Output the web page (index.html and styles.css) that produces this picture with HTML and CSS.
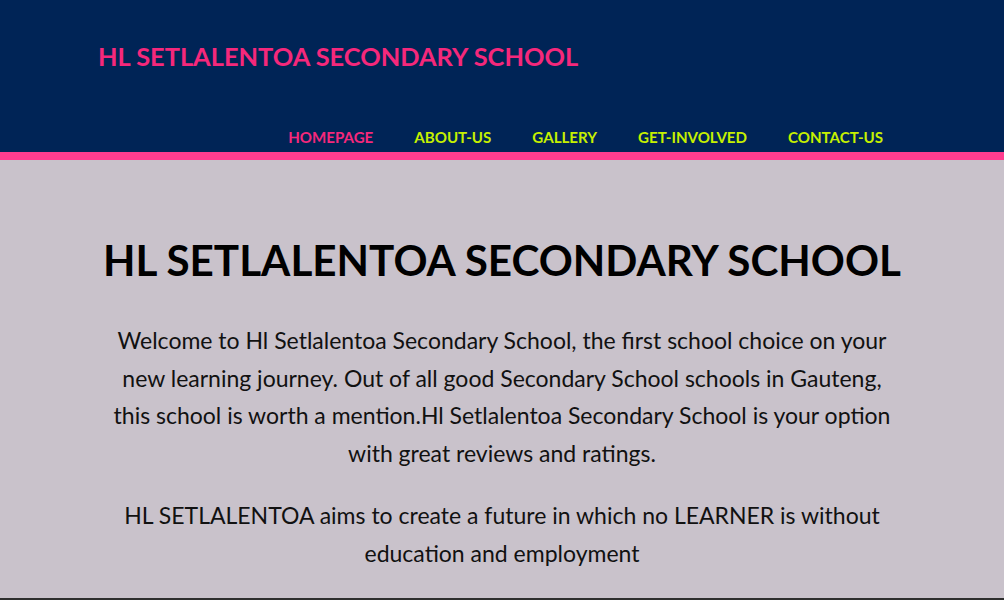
FILE: index.html
```html
<!DOCTYPE html>
<html lang="en">
<head>
<meta charset="utf-8">
<title>HL Setlalentoa Secondary School</title>
<link rel="stylesheet" href="styles.css">
</head>
<body>
<header class="site-header">
  <div class="brand">HL SETLALENTOA SECONDARY SCHOOL</div>
  <nav class="nav">
    <a class="nav-link active" href="#">HOMEPAGE</a>
    <a class="nav-link" href="#">ABOUT-US</a>
    <a class="nav-link" href="#">GALLERY</a>
    <a class="nav-link" href="#">GET-INVOLVED</a>
    <a class="nav-link" href="#">CONTACT-US</a>
  </nav>
</header>
<main class="intro">
  <h1 class="intro-title">HL SETLALENTOA SECONDARY SCHOOL</h1>
  <p class="intro-text">Welcome to Hl Setlalentoa Secondary School, the first school choice on your new learning journey. Out of all good Secondary School schools in Gauteng, this school is worth a mention.Hl Setlalentoa Secondary School is your option with great reviews and ratings.</p>
  <p class="intro-text">HL SETLALENTOA aims to create a future in which no LEARNER is without education and employment</p>
</main>
<footer class="site-footer"></footer>
</body>
</html>
```
FILE: styles.css
```css
html, body {
  margin: 0;
  padding: 0;
}
body {
  background: #c9c2cb;
  font-family: "Lato", "Open Sans", sans-serif;
  color: #111;
}
.site-header {
  background: #002456;
  height: 152px;
  border-bottom: 8px solid #ff3d8f;
  display: flex;
  flex-direction: column;
  box-sizing: content-box;
}
.brand {
  color: #f5287b;
  font-weight: bold;
  font-size: 25.4px;
  line-height: 30px;
  padding: 41px 0 0 98px;
}
.nav {
  display: flex;
  justify-content: flex-end;
  gap: 41px;
  padding: 56px 121px 0 0;
}
.nav-link {
  color: #c6f000;
  font-weight: bold;
  font-size: 15.1px;
  line-height: 20px;
  text-decoration: none;
}
.nav-link.active {
  color: #f5287b;
}
.intro {
  display: flex;
  flex-direction: column;
  align-items: center;
  padding-top: 74px;
  height: 364px;
}
.intro-title {
  margin: 0;
  font-size: 42.2px;
  line-height: 52px;
  font-weight: bold;
  color: #000;
}
.intro-text {
  width: 800px;
  margin: 36px 0 0;
  text-align: center;
  font-size: 23px;
  line-height: 37.7px;
}
.intro-text + .intro-text {
  margin-top: 24px;
}
.site-footer {
  height: 2px;
  background: #2e2e2e;
}
```
